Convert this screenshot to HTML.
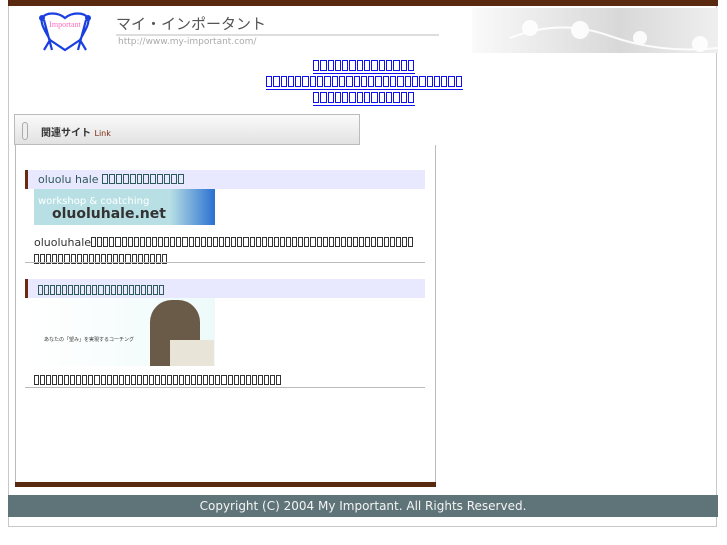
<!DOCTYPE html>
<html><head><meta charset="utf-8"><style>
body{margin:0;background:#fff;width:727px;height:545px;position:relative;overflow:hidden;font-family:"DejaVu Sans","Liberation Sans","Noto Sans CJK JP",sans-serif}
.a{position:absolute}
.t{display:inline-block;box-sizing:border-box;border:1px solid currentColor;vertical-align:-1px;margin-right:1px}
</style></head><body>
<div class="a" style="left:8px;top:0;width:709px;height:527px;border:1px solid #c8c8c8;border-top:none;box-sizing:border-box"></div>
<div class="a" style="left:8px;top:0;width:710px;height:6px;background:#5a2a10"></div>
<svg class="a" style="left:36px;top:10px" width="58" height="42" viewBox="0 0 58 42">
<path d="M6 8 C10 2 22 2 29 8 C36 2 48 2 52 8 C54 14 48 22 44 30 L50 40 M6 8 C4 14 10 22 14 30 L8 40 M14 30 L29 40 L44 30 M8 10 L16 40 M50 10 L42 40" fill="none" stroke="#1a3fe0" stroke-width="2.2"/>
<circle cx="6" cy="8" r="3" fill="#1a3fe0"/><circle cx="52" cy="8" r="3" fill="#1a3fe0"/>
<text x="29" y="17" font-size="8" fill="#ff70c0" text-anchor="middle" font-family="Liberation Serif">Important</text></svg>
<div class="a" style="left:116px;top:13px;font-size:15px;color:#555">マイ・インポータント</div>
<div class="a" style="left:116px;top:34px;width:323px;height:2px;background:#ddd"></div>
<div class="a" style="left:118px;top:37px;font-size:9px;color:#aaa">http://www.my-important.com/</div>
<div class="a" style="left:472px;top:8px;width:246px;height:45px;background:linear-gradient(90deg,#fafafa,#d8d8d8 60%,#efefef)"></div>
<svg class="a" style="left:500px;top:8px" width="218" height="45"><g fill="#fff" opacity=".9"><circle cx="30" cy="20" r="8"/><circle cx="80" cy="22" r="9"/><circle cx="140" cy="30" r="7"/><circle cx="200" cy="36" r="8"/><path d="M10 30 Q60 10 110 28 T218 40" stroke="#fff" stroke-width="2" fill="none"/></g></svg>
<div class="a" id="l1" style="left:313px;top:60px;color:#1010ee"></div>
<div class="a" id="l2" style="left:266px;top:76px;color:#1010ee"></div>
<div class="a" id="l3" style="left:313px;top:92px;color:#1010ee"></div>
<div class="a" style="left:14px;top:114px;width:346px;height:31px;box-sizing:border-box;border:1px solid #bbb;background:linear-gradient(#fafafa,#e2e2e2)"></div>
<div class="a" style="left:22px;top:122px;width:4px;height:16px;border:1px solid #aaa;border-radius:3px;background:#eee"></div>
<div class="a" style="left:41px;top:124px;font-size:10px;font-weight:bold;color:#333">関連サイト <span style="font-weight:normal;font-size:8px;color:#7a2a10">Link</span></div>
<div class="a" style="left:15px;top:145px;width:421px;height:339px;box-sizing:border-box;border:1px solid #bbb;border-top:none"></div>
<div class="a" style="left:15px;top:482px;width:421px;height:5px;background:#5a2a10"></div>
<div class="a" style="left:25px;top:170px;width:400px;height:19px;background:#e8e8ff;border-left:3px solid #6b2a10;box-sizing:border-box"></div>
<div class="a" id="h1" style="left:38px;top:173px;font-size:11px;color:#2f5a5a">oluolu hale </div>
<div class="a" style="left:34px;top:189px;width:181px;height:36px;background:linear-gradient(90deg,#b8e0e4,#b8e0e4 75%,#2a70d0)"></div>
<div class="a" style="left:38px;top:196px;font-size:10px;color:#fff">workshop &amp; coatching</div>
<div class="a" style="left:52px;top:206px;font-size:14px;font-weight:bold;color:#333">oluoluhale.net</div>
<div class="a" id="d1" style="left:34px;top:234px;font-size:11px;color:#333;line-height:17px;width:395px">oluoluhale</div>
<div class="a" style="left:25px;top:262px;width:400px;height:1px;background:#bbb"></div>
<div class="a" style="left:25px;top:279px;width:400px;height:19px;background:#e8e8ff;border-left:3px solid #6b2a10;box-sizing:border-box"></div>
<div class="a" id="h2" style="left:38px;top:285px;color:#2f5a5a;font-size:10px;line-height:10px"></div>
<div class="a" style="left:34px;top:298px;width:181px;height:68px;background:linear-gradient(90deg,#fff,#eefafa)"></div>
<div class="a" style="left:150px;top:300px;width:50px;height:66px;background:#6a5a48;border-radius:22px 22px 0 0"></div>
<div class="a" style="left:170px;top:340px;width:44px;height:26px;background:#e8e4d8"></div>
<div class="a" style="left:44px;top:336px;font-size:5px;color:#333">あなたの「望み」を実現するコーチング</div>
<div class="a" id="d2" style="left:34px;top:375px;color:#333;font-size:10px;line-height:10px"></div>
<div class="a" style="left:25px;top:387px;width:400px;height:1px;background:#bbb"></div>
<div class="a" style="left:8px;top:495px;width:710px;height:22px;background:#5f7478;color:#f4f4f4;font-size:12px;text-align:center;line-height:22px">Copyright (C) 2004 My Important. All Rights Reserved.</div>
<script>
function b(id,n,w,h,extra){var e=document.getElementById(id),s='';for(var i=0;i<n;i++){s+=(extra&&i==extra?'<br>':'')+'<span class="t" style="width:'+(w-1)+'px;height:'+h+'px"></span>';}e.innerHTML+=s;}
b('l1',14,7.3,11);b('l2',27,7.3,11);b('l3',14,7.3,11);
['l1','l2','l3'].forEach(function(i){var e=document.getElementById(i);e.style.borderBottom='1px solid #1010ee';e.style.lineHeight='12px';e.style.fontSize='11px'});
b('h1',12,6.9,10);b('h2',21,6.05,10);b('d1',75,6.1,10,53);b('d2',41,6.05,10);
</script>
</body></html>
